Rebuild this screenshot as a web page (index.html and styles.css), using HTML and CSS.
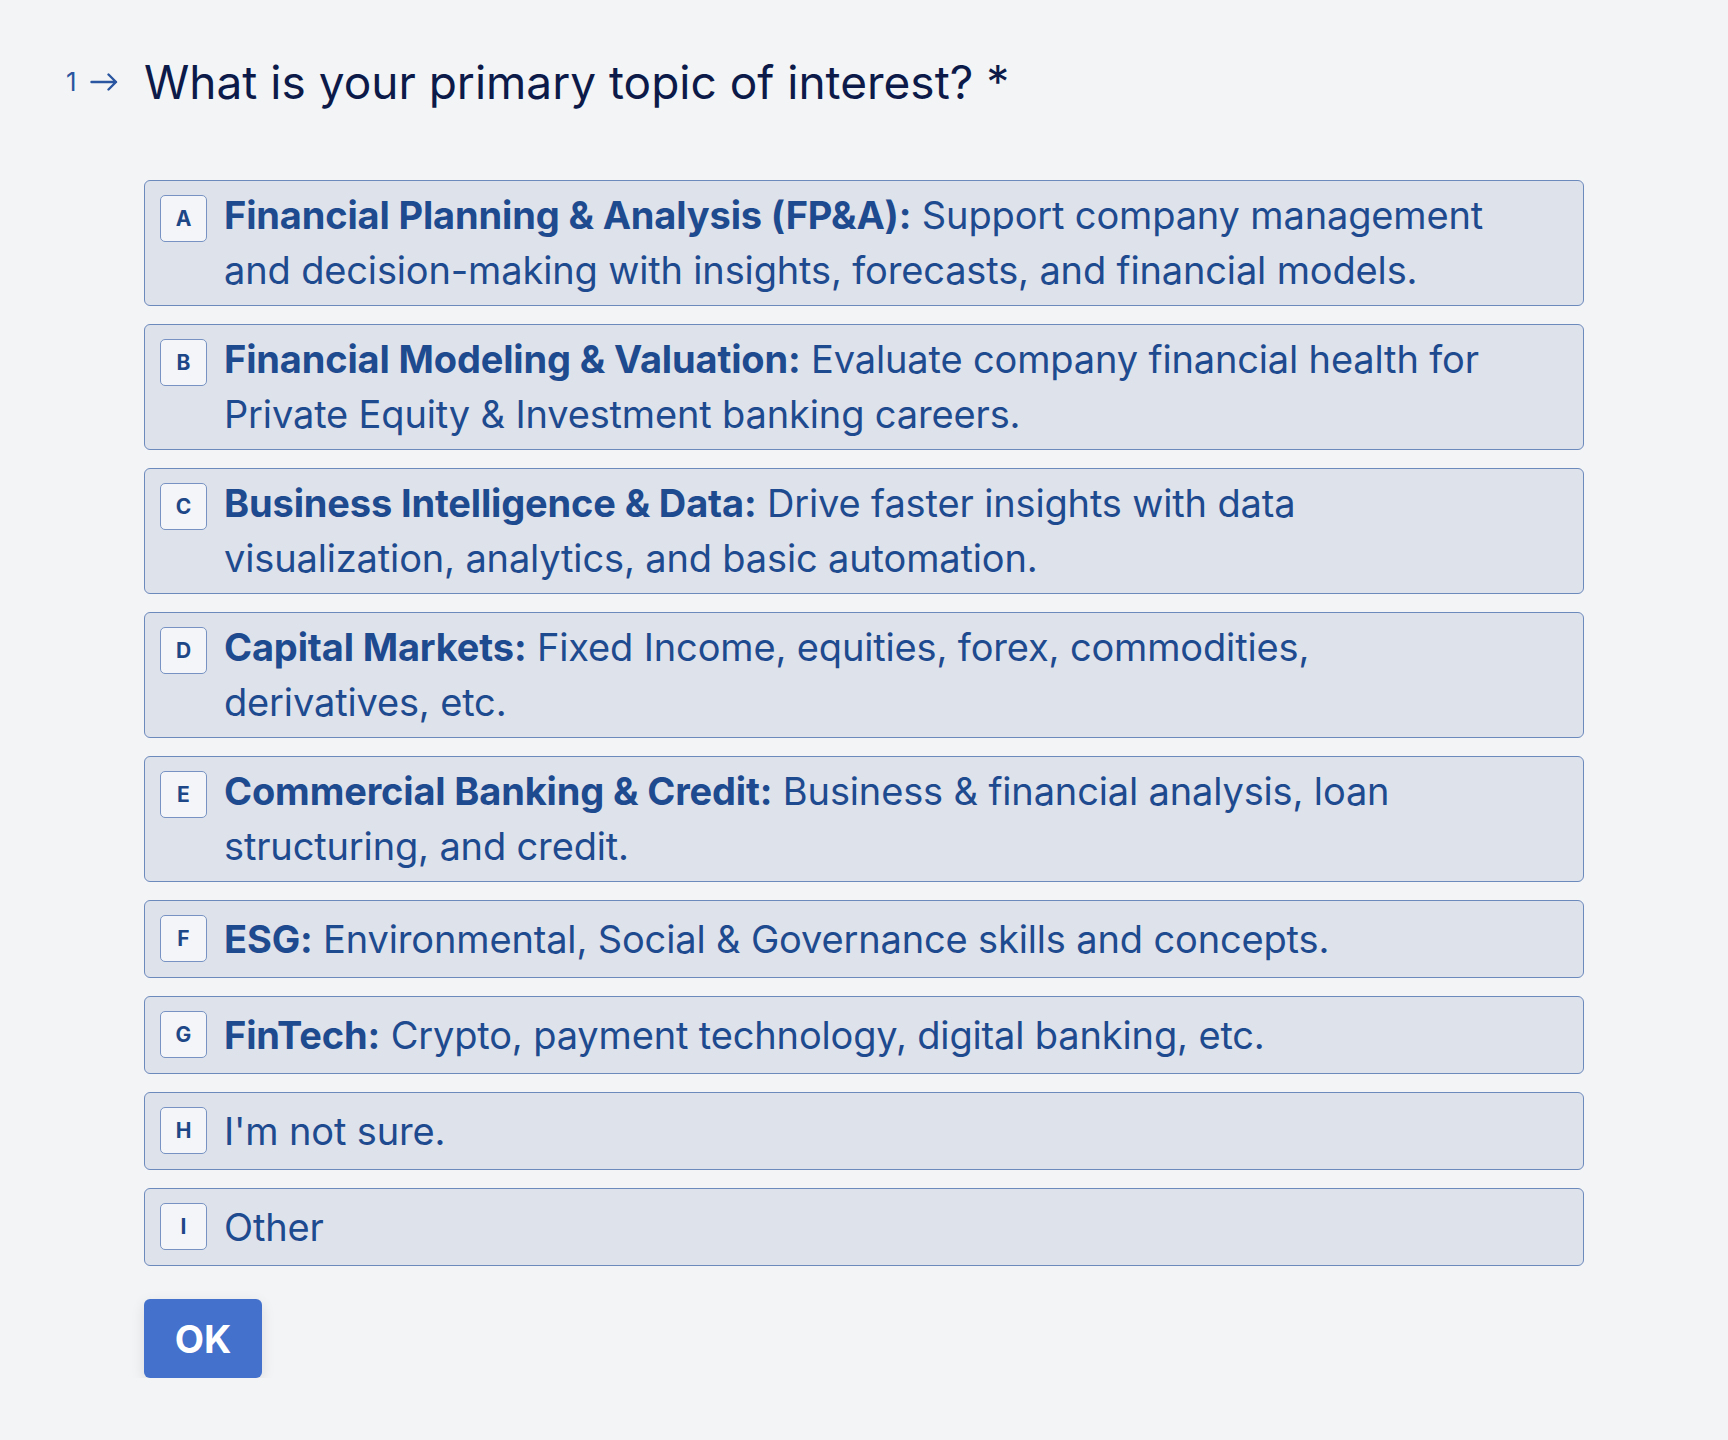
FILE: index.html
```html
<!DOCTYPE html>
<html lang="en">
<head>
<meta charset="utf-8">
<title>Primary topic of interest</title>
<link rel="stylesheet" href="styles.css">
</head>
<body>
<main class="form">
  <div class="question">
    <div class="qnum"><span class="num">1</span>
      <svg class="arrow" viewBox="0 0 28 18" width="28" height="18" aria-hidden="true"><path d="M1.5 9H26M18.5 1.5L26 9L18.5 16.5" fill="none" stroke="currentColor" stroke-width="2.4" stroke-linecap="round" stroke-linejoin="round"/></svg>
    </div>
    <h1 class="qtext">What is your primary topic of interest? *</h1>
  </div>
  <div class="choices">
    <div class="choice"><span class="key">A</span><span class="label"><b>Financial Planning &amp; Analysis (FP&amp;A):</b> Support company management and decision-making with insights, forecasts, and financial models.</span></div>
    <div class="choice"><span class="key">B</span><span class="label"><b>Financial Modeling &amp; Valuation:</b> Evaluate company financial health for Private Equity &amp; Investment banking careers.</span></div>
    <div class="choice"><span class="key">C</span><span class="label"><b>Business Intelligence &amp; Data:</b> Drive faster insights with data visualization, analytics, and basic automation.</span></div>
    <div class="choice"><span class="key">D</span><span class="label"><b>Capital Markets:</b> Fixed Income, equities, forex, commodities, derivatives, etc.</span></div>
    <div class="choice"><span class="key">E</span><span class="label"><b>Commercial Banking &amp; Credit:</b> Business &amp; financial analysis, loan structuring, and credit.</span></div>
    <div class="choice"><span class="key">F</span><span class="label"><b>ESG:</b> Environmental, Social &amp; Governance skills and concepts.</span></div>
    <div class="choice"><span class="key">G</span><span class="label"><b>FinTech:</b> Crypto, payment technology, digital banking, etc.</span></div>
    <div class="choice"><span class="key">H</span><span class="label">I'm not sure.</span></div>
    <div class="choice"><span class="key">I</span><span class="label">Other</span></div>
  </div>
  <button class="ok" type="button">OK</button>
</main>
</body>
</html>
```
FILE: styles.css
```css
html, body {
  margin: 0;
  padding: 0;
  background: #f3f4f6;
}
body {
  font-family: Inter, "Noto Sans", "Liberation Sans", sans-serif;
  color: #1e4a8f;
}
.form {
  padding: 52px 0 0 66px;
  width: 1518px;
}
.question {
  display: flex;
  align-items: flex-start;
}
.qnum {
  width: 78px;
  flex: none;
  display: flex;
  align-items: center;
  color: #2a55a0;
  font-size: 26px;
  line-height: 30px;
  margin-top: 15px;
}
.num {
  width: 24px;
  flex: none;
}
.arrow {
  display: block;
}
.qtext {
  margin: 0;
  font-size: 46px;
  line-height: 60px;
  font-weight: 400;
  color: #0c1a4a;
}
.choices {
  margin: 68px 0 0 78px;
  display: flex;
  flex-direction: column;
  gap: 18px;
  width: 1440px;
}
.choice {
  box-sizing: border-box;
  display: flex;
  min-height: 78px;
  padding: 7px 72px 7px 15px;
  border: 1px solid #6d8abd;
  border-radius: 6px;
  background: #dee2eb;
}
.key {
  box-sizing: border-box;
  flex: none;
  width: 47px;
  height: 47px;
  margin-top: 7px;
  margin-right: 17px;
  display: flex;
  align-items: center;
  justify-content: center;
  border: 1px solid #7893c3;
  border-radius: 5px;
  background: #f3f5f8;
  font-size: 21px;
  font-weight: 700;
  color: #1e4787;
}
.label {
  align-self: center;
  font-size: 38px;
  line-height: 55px;
  letter-spacing: -0.15px;
  color: #1e4a8f;
}
.label b {
  font-weight: 700;
}
.ok {
  margin: 33px 0 0 78px;
  width: 118px;
  height: 79px;
  border: 0;
  border-radius: 6px;
  background: #4371cc;
  color: #fff;
  font-family: inherit;
  font-size: 38px;
  font-weight: 700;
  box-shadow: 0 4px 14px rgba(0, 0, 0, 0.10);
}
```
